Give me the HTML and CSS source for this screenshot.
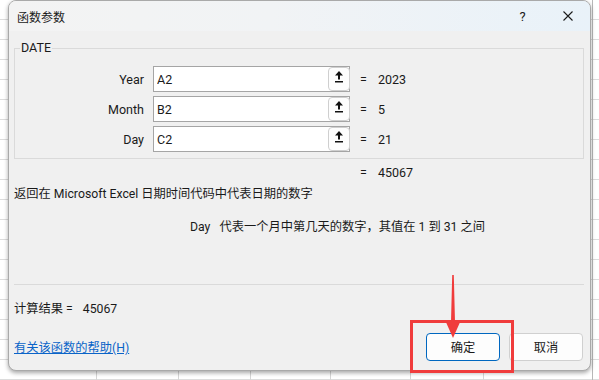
FILE: index.html
```html
<!DOCTYPE html>
<html lang="zh-CN">
<head>
    <meta charset="UTF-8">
    <meta name="viewport" content="width=device-width, initial-scale=1.0">
    <title>函数参数</title>
    <link rel="stylesheet" href="styles.css">
</head>
<body>
    <div class="dialog">
        <div class="titlebar">
            <span class="title">函数参数</span>
            <div class="caption-btns">
                <span class="cap-btn">?</span>
                <span class="cap-btn">
                    <svg width="10" height="10" viewBox="0 0 10 10"><path d="M0.5 0.5 L9.5 9.5 M9.5 0.5 L0.5 9.5" stroke="#1a1a1a" stroke-width="1.1" fill="none"/></svg>
                </span>
            </div>
        </div>

        <div class="content">
            <fieldset class="args">
                <legend>DATE</legend>
                <div class="arg-row">
                    <label>Year</label>
                    <div class="ref-edit">
                        <input type="text" value="A2">
                        <button class="ref-btn"><svg width="10" height="12" viewBox="0 0 10 12"><path d="M5 0 L9 4.6 L1 4.6 Z M4 4 H6 V8.6 H4 Z M1 10 H9 V11.4 H1 Z" fill="#111"/></svg></button>
                    </div>
                    <span class="eq">=</span><span class="val">2023</span>
                </div>
                <div class="arg-row">
                    <label>Month</label>
                    <div class="ref-edit">
                        <input type="text" value="B2">
                        <button class="ref-btn"><svg width="10" height="12" viewBox="0 0 10 12"><path d="M5 0 L9 4.6 L1 4.6 Z M4 4 H6 V8.6 H4 Z M1 10 H9 V11.4 H1 Z" fill="#111"/></svg></button>
                    </div>
                    <span class="eq">=</span><span class="val">5</span>
                </div>
                <div class="arg-row">
                    <label>Day</label>
                    <div class="ref-edit">
                        <input type="text" value="C2">
                        <button class="ref-btn"><svg width="10" height="12" viewBox="0 0 10 12"><path d="M5 0 L9 4.6 L1 4.6 Z M4 4 H6 V8.6 H4 Z M1 10 H9 V11.4 H1 Z" fill="#111"/></svg></button>
                    </div>
                    <span class="eq">=</span><span class="val">21</span>
                </div>
            </fieldset>

            <div class="result-row"><span class="eq">=</span><span class="val">45067</span></div>
            <p class="desc">返回在 Microsoft Excel 日期时间代码中代表日期的数字</p>
            <p class="arg-desc"><span class="arg-name">Day</span>代表一个月中第几天的数字，其值在 1 到 31 之间</p>

            <div class="sep"></div>

            <div class="calc">计算结果 = <span class="calc-val">45067</span></div>
            <div class="footer">
                <a class="help-link" href="#">有关该函数的帮助(H)</a>
                <div class="buttons">
                    <button class="btn primary">确定</button>
                    <button class="btn">取消</button>
                </div>
            </div>
        </div>

        <!-- annotation over the OK button -->
        <div class="highlight-box"></div>
        <svg class="callout-arrow" width="16" height="64" viewBox="0 0 16 64">
            <path d="M7.2 0 L8.8 0 L10 47 L6 47 Z M0 45 L16 45 L8 63 Z" fill="#f03c3c"/>
        </svg>
    </div>
</body>
</html>
```

FILE: styles.css
```css
* {
    box-sizing: border-box;
}
body {
    margin: 0;
    width: 599px;
    height: 380px;
    overflow: hidden;
    font-family: Roboto, "Noto Sans CJK SC", sans-serif;
    font-size: 12.25px;
    color: #1a1a1a;
    background-color: #fff;
    background-image:
        linear-gradient(to right,
            transparent 96px, #d6d6d6 96px 97px,
            transparent 97px 178px, #d6d6d6 178px 179px,
            transparent 179px 250px, #d6d6d6 250px 251px,
            transparent 251px 330px, #d6d6d6 330px 331px,
            transparent 331px 410px, #d6d6d6 410px 411px,
            transparent 411px 483px, #d6d6d6 483px 484px,
            transparent 484px 592px, #b8b8b8 592px 593px,
            transparent 593px),
        repeating-linear-gradient(to bottom, transparent 0 19px, #dcdcdc 19px 20px);
}
.dialog {
    position: relative;
    margin-left: 8px;
    width: 583px;
    height: 371px;
    background: #f0f0f0;
    border: 1px solid #a9a9a9;
    border-radius: 8px;
    box-shadow: 0 2px 4px rgba(0, 0, 0, 0.35);
}
.titlebar {
    height: 30px;
    display: flex;
    align-items: center;
    justify-content: space-between;
    padding-left: 8px;
    border-radius: 7px 7px 0 0;
    font-size: 12px;
    background: linear-gradient(to right, #f3f3f3 0%, #f1f3f5 45%, #e9f2f9 100%);
}
.caption-btns {
    display: flex;
    height: 100%;
}
.cap-btn {
    width: 45px;
    display: flex;
    align-items: center;
    justify-content: center;
    font-size: 13px;
}
.content {
    padding: 0 6px 0 5px;
}
.args {
    margin: 9px 0 0 0;
    padding: 10px 0 6px 0;
    border: 1px solid #dadada;
    min-inline-size: 0;
}
.args legend {
    margin-left: 5px;
    padding: 0 1px;
    line-height: 16px;
    font-size: 12.5px;
}
.arg-row {
    display: flex;
    align-items: center;
    height: 26px;
    margin-bottom: 4px;
}
.arg-row:last-child {
    margin-bottom: 0;
}
.arg-row label {
    width: 129px;
    text-align: right;
    margin-right: 9px;
    font-size: 12.5px;
}
.ref-edit {
    width: 197px;
    height: 26px;
    display: flex;
    background: #fff;
    border: 1px solid #a5a5a5;
}
.ref-edit input {
    flex: 1;
    min-width: 0;
    border: none;
    outline: none;
    padding: 0 3px;
    font: inherit;
    font-size: 12.5px;
    color: #1a1a1a;
    background: transparent;
}
.ref-btn {
    width: 22px;
    height: 24px;
    margin-right: -1px;
    padding: 3px 0 0 0;
    display: flex;
    justify-content: center;
    align-items: flex-start;
    background: #fdfdfd;
    border: 1px solid #cfcfcf;
    border-radius: 4px;
}
.eq {
    display: inline-block;
    width: 18px;
    margin-left: 10px;
    font-size: 12.5px;
}
.val {
    font-size: 12.5px;
}
.result-row {
    margin-top: 6px;
    line-height: 16px;
    padding-left: 336px;
}
.desc {
    margin: 5px 0 0 0;
    line-height: 16px;
}
.arg-desc {
    margin: 17px 0 0 0;
    padding-left: 176px;
    line-height: 16px;
}
.arg-name {
    margin-right: 9px;
}
.sep {
    margin-top: 49px;
    height: 1px;
    background: #dadada;
}
.calc {
    margin-top: 16px;
    line-height: 16px;
}
.calc-val {
    margin-left: 7px;
}
.footer {
    margin-top: 16px;
    display: flex;
    justify-content: space-between;
    align-items: center;
}
.help-link {
    color: #0a64c8;
    text-decoration: underline;
}
.buttons {
    display: flex;
    gap: 9px;
    margin-right: 1px;
}
.btn {
    width: 74px;
    height: 28px;
    font: inherit;
    color: #1a1a1a;
    background: #fdfdfd;
    border: 1px solid #d0d0d0;
    border-radius: 4px;
}
.btn.primary {
    border-color: #0067c0;
}
.highlight-box {
    position: absolute;
    left: 401px;
    top: 319px;
    width: 104px;
    height: 53px;
    border: 3px solid #f03c3c;
}
.callout-arrow {
    position: absolute;
    left: 436px;
    top: 274px;
}
```
